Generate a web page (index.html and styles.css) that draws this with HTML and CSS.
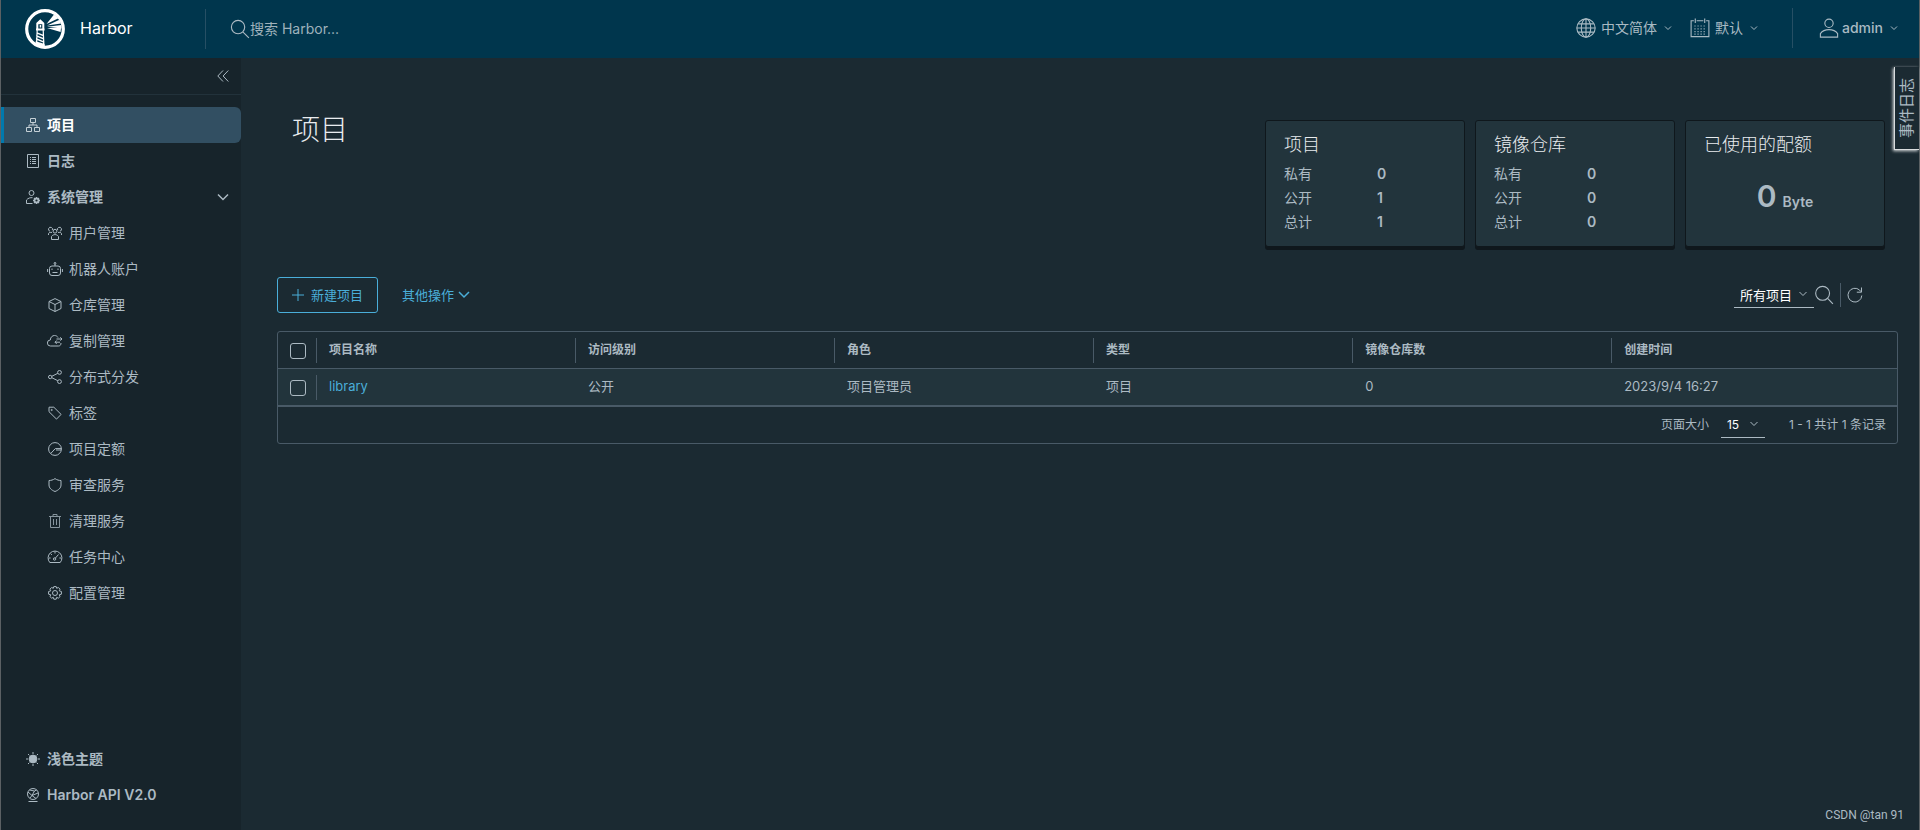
FILE: index.html
```html
<!DOCTYPE html>
<html lang="zh-CN">
<head>
<meta charset="utf-8">
<title>Harbor</title>
<link rel="stylesheet" href="styles.css">
</head>
<body>
<div class="app">
  <header class="header">
    <a class="brand" href="#">
      <svg class="logo" viewBox="0 0 40 40"><circle cx="20" cy="20" r="18.300" fill="none" stroke="#fff" stroke-width="3.200"/><path fill="#fff" d="M15.300 10.300l4 3.700v1.300h-8V14zM11.300 15.300h2v5h-2zM17.300 15.300h2v5h-2zM11 19.600h8.600v2H11zM14.700 16h1.500v2.400h-1.500zM11.500 23l7.300 3v1.600l-7.300-3zM11.300 26l7.700 3.200v1.600L11.200 27.600zM11 29l8.400 3.400v1.700L10.900 30.600zM10.700 32.300l9 2.700.3 3.700L10 36zM11.600 21h1.200l-.6 14h-1.300zM17.600 21h1.200l.7 15h-1.300zM21.500 15L29 5.500l4.500 3.700zM22 16.400l12.500-5.600 1.600 3.600zM22 17.700l14.500-1.700v3.400zM22 19l14-.1-.4 4z"/></svg>
      <span class="brand-name">Harbor</span>
    </a>
    <form class="search" role="search">
      <svg class="ico20" viewBox="0 0 36 36"><circle cx="14.500" cy="14.500" r="12"/><path d="M23.500 23.500L34 34"/></svg>
      <input class="search-input" type="text" aria-label="搜索 Harbor..." placeholder="搜索 Harbor...">
    </form>
    <div class="header-actions">
      <button class="head-btn" type="button">
        <svg class="ico20" viewBox="0 0 36 36"><circle cx="18" cy="18" r="16.500"/><ellipse cx="18" cy="18" rx="8.500" ry="16.500"/><path d="M18 1.500v33M1.500 18h33M4 10.500h28M4 25.500h28"/></svg>
        <span>中文简体</span><svg class="caret" viewBox="0 0 8 8"><path d="M1 2.500l3 3 3-3"/></svg>
      </button>
      <button class="head-btn" type="button">
        <svg class="ico20" viewBox="0 0 36 36"><path d="M7 5H2v28.500h32V5h-5M12 5h12M9.500 1v8M26.500 1v8"/><path stroke-dasharray="2 3.500" d="M8 14.500h22M8 19.500h22M8 24.500h22M8 29h22"/></svg>
        <span>默认</span><svg class="caret" viewBox="0 0 8 8"><path d="M1 2.500l3 3 3-3"/></svg>
      </button>
      <button class="head-btn user" type="button">
        <svg class="ico20" viewBox="0 0 36 36"><circle cx="18" cy="9.500" r="7.500"/><path d="M2.500 34.500V28c4-5.500 10-7 15.500-7s11.500 1.500 15.500 7v6.500z"/></svg>
        <span>admin</span><svg class="caret" viewBox="0 0 8 8"><path d="M1 2.500l3 3 3-3"/></svg>
      </button>
    </div>
  </header>

  <div class="body">
    <nav class="sidebar" aria-label="导航">
      <div class="collapse"><button class="collapse-btn" type="button" aria-label="收起"><svg viewBox="0 0 12 12"><path d="M6 .5L.8 6 6 11.500M11.300 .5L6.100 6l5.200 5.500"/></svg></button></div>
      <a class="item active" href="#"><svg class="ico" viewBox="0 0 14 14"><path d="M4.500.5h5v4h-5zM.5 9.500h5v4h-5zM8.500 9.500h5v4h-5zM7 4.500V7M3 9.500V7h8v2.500"/></svg>项目</a>
      <a class="item" href="#"><svg class="ico" viewBox="0 0 14 14"><path d="M1.500.5h11v13h-11zM4 3.500h1M4 5.500h1M4 7.500h1M4 9.500h1M6 3.500h4M6 5.500h4M6 7.500h4M6 9.500h4"/></svg>日志</a>
      <a class="item" href="#"><svg class="ico" viewBox="0 0 14 14"><circle cx="5.500" cy="3" r="2.500"/><path d="M6.500 13.500h-6V10c1.500-2 4-2.500 6-2.300"/><circle cx="10.500" cy="10.500" r="2" stroke-width="1.800"/><path stroke-width="1.300" d="M10.500 7v1.500M10.500 12.500V14M7 10.500h1.500M12.500 10.500H14M8 8l1 1M12 12l1 1M8 13l1-1M12 9l1-1"/></svg>系统管理<svg class="expand" viewBox="0 0 12 12"><path d="M1 3.500l5 5 5-5"/></svg></a>
      <a class="item sub" href="#"><svg class="ico" viewBox="0 0 14 14"><circle cx="7" cy="5.200" r="1.900"/><path d="M3.500 13.500v-3C4.500 9 6 8.600 7 8.600s2.500.4 3.500 1.900v3zM4.300 4.200A2 2 0 1 0 2 5.200M.5 9V7.500C1 6.500 2.500 6 4 6.500M9.700 4.200A2 2 0 1 1 12 5.200M13.500 9V7.500C13 6.500 11.500 6 10 6.500"/></svg>用户管理</a>
      <a class="item sub" href="#"><svg class="ico wide" viewBox="0 0 16 14"><rect x="2.500" y="4" width="11" height="9.500" rx="2.500"/><circle cx="8" cy="1.300" r=".9"/><path d="M8 2v2M.6 7v3M15.400 7v3M5 6.500v1.500M11 6.500v1.500M5.500 10.500h5"/></svg>机器人账户</a>
      <a class="item sub" href="#"><svg class="ico" viewBox="0 0 14 14"><path d="M7 .6l6 2.900v7l-6 3-6-3v-7zM1 3.500l6 3 6-3M7 6.500v7"/></svg>仓库管理</a>
      <a class="item sub" href="#"><svg class="ico wide" viewBox="0 0 16 14"><path d="M11.500 12H3.500a3 3 0 0 1-.2-6C3.500 3 5.500 1.500 7.500 1.500c1.500 0 2.800.7 3.500 2M14 9c0 2-1 3-2.500 3M9.500 5h5.500M13.300 3.300L15 5l-1.700 1.600M13 8.200H8M9.700 6.500L8 8.200l1.700 1.700"/></svg>复制管理</a>
      <a class="item sub" href="#"><svg class="ico" viewBox="0 0 14 14"><circle cx="2.200" cy="7" r="1.700"/><circle cx="11.500" cy="2.400" r="1.900"/><circle cx="11.500" cy="11.600" r="1.900"/><path d="M3.800 6.300l6-3M3.800 7.700l6 3"/></svg>分布式分发</a>
      <a class="item sub" href="#"><svg class="ico" viewBox="0 0 14 14"><path d="M1 1.500v4.200l7.500 7.400 4.600-4.700L5.800 1.200H1z"/><circle cx="3.700" cy="4" r=".6"/></svg>标签</a>
      <a class="item sub" href="#"><svg class="ico" viewBox="0 0 14 14"><circle cx="7" cy="7" r="6.400"/><path d="M13.400 6.600H7.300L2.800 11.400M13 8H8"/></svg>项目定额</a>
      <a class="item sub" href="#"><svg class="ico" viewBox="0 0 14 14"><path d="M7 .6C5 2 3 2.500 1 2.500V7c0 3 2.500 5.200 6 6.500 3.500-1.300 6-3.500 6-6.500V2.500C11 2.500 9 2 7 .6z"/></svg>审查服务</a>
      <a class="item sub" href="#"><svg class="ico thin" viewBox="0 0 14 14"><path d="M1 2.500h12M2.500 2.500v11h9v-11M5 2.500v-2h4v2M5.500 5v6M8.500 5v6"/></svg>清理服务</a>
      <a class="item sub" href="#"><svg class="ico wide" viewBox="0 0 16 14"><path d="M2.800 12.500A6.900 6.900 0 1 1 13.200 12.500zM8 1.500v2M2 8h1.600M12.400 8H14M3.700 3.700l1.200 1.200"/><path d="M11.500 4.500L8 8.500"/><circle cx="7.600" cy="9" r="1.200"/></svg>任务中心</a>
      <a class="item sub" href="#"><svg class="ico" viewBox="0 0 14 14"><circle cx="7" cy="7" r="2.500"/><path stroke-linejoin="round" d="M5.800.6h2.400l.5 1.700 1.600-.8 1.800 1.700-.9 1.600 2.200.7v2.700l-2.200.6.9 1.700-1.800 1.700-1.600-.9-.5 1.900H5.800l-.5-1.900-1.600.9-1.800-1.700.9-1.700-2.200-.6V5.500l2.200-.7-.9-1.600 1.800-1.700 1.600.8z"/></svg>配置管理</a>
      <div class="side-foot">
        <a class="item" href="#"><svg class="ico" viewBox="0 0 14 14"><circle cx="7" cy="7" r="3.900" fill="currentColor"/><path d="M7 0v2M7 12v2M0 7h2M12 7h2M2 2l1.400 1.400M10.600 10.600L12 12M2 12l1.400-1.400M10.600 3.400L12 2"/></svg>浅色主题</a>
        <a class="item" href="#"><svg class="ico" viewBox="0 0 14 14"><circle cx="7" cy="6" r="5.500"/><path d="M2.500 13.500h9M2 4l4 3.500L12 5M3.500 2l5 1L6 7.500l4 3M4 10l2-2.500M8.500 3l2-1"/></svg>Harbor API V2.0</a>
      </div>
    </nav>

    <main class="main">
      <section class="summary">
        <h1 class="title">项目</h1>
        <div class="cards">
          <article class="card"><h2 class="card-title">项目</h2>
            <dl class="stats"><dt>私有</dt><dd>0</dd><dt>公开</dt><dd>1</dd><dt>总计</dt><dd>1</dd></dl></article>
          <article class="card"><h2 class="card-title">镜像仓库</h2>
            <dl class="stats"><dt>私有</dt><dd>0</dd><dt>公开</dt><dd>0</dd><dt>总计</dt><dd>0</dd></dl></article>
          <article class="card"><h2 class="card-title">已使用的配额</h2>
            <p class="quota"><span class="quota-num">0</span> <span>Byte</span></p></article>
        </div>
      </section>

      <div class="toolbar">
        <button class="btn-new" type="button"><svg viewBox="0 0 12 12"><path d="M6 0v12M0 6h12"/></svg>新建项目</button>
        <button class="btn-more" type="button">其他操作<svg viewBox="0 0 12 12"><path d="M1 3l5 5 5-5"/></svg></button>
        <div class="filters">
          <span class="pick filter-pick"><select aria-label="项目筛选"><option>所有项目</option></select><svg class="pick-caret" viewBox="0 0 8 8"><path d="M.5 2l3.500 3.500L7.500 2"/></svg></span>
          <button class="icon-btn" type="button" aria-label="搜索"><svg class="ico20" viewBox="0 0 36 36"><circle cx="15.500" cy="15" r="12.500"/><path d="M25 24.500L34 34"/></svg></button>
          <button class="icon-btn refresh" type="button" aria-label="刷新"><svg class="ico16" viewBox="0 0 16 16"><path d="M14.800 8.500A6.900 6.900 0 1 1 12.500 3L14 4.700M14.500 .5v4.700H9.800"/></svg></button>
        </div>
      </div>

      <div class="grid">
        <table class="table">
          <colgroup><col class="c-check"><col class="c"><col class="c"><col class="c"><col class="c"><col class="c"><col></colgroup>
          <thead><tr><th class="chk"><input type="checkbox" aria-label="全选"></th><th>项目名称</th><th>访问级别</th><th>角色</th><th>类型</th><th>镜像仓库数</th><th>创建时间</th></tr></thead>
          <tbody><tr><td class="chk"><input type="checkbox" aria-label="选择 library"></td><td><a class="link" href="#">library</a></td><td>公开</td><td>项目管理员</td><td>项目</td><td>0</td><td>2023/9/4 16:27</td></tr></tbody>
        </table>
        <div class="grid-foot">
          <label for="size">页面大小</label>
          <span class="pick size-pick"><select id="size"><option>15</option></select><svg class="pick-caret" viewBox="0 0 8 8"><path d="M.5 2l3.500 3.500L7.500 2"/></svg></span>
          <span>1 - 1 共计 1 条记录</span>
        </div>
      </div>
    </main>
  </div>
  <button class="event-tab" type="button">事件日志</button>
  <span class="credit">CSDN @tan 91</span>
</div>
</body>
</html>
```

FILE: styles.css
```css
* { box-sizing: border-box; }
body {
  margin: 0;
  background: #1b2a32;
  color: #acbac3;
  font: 14px/24px Inter, "Noto Sans CJK SC", sans-serif;
}
h1, h2, p, dl, dd { margin: 0; }
a { color: inherit; text-decoration: none; }
button, input, select { font: inherit; color: inherit; background: none; border: 0; padding: 0; margin: 0; }
svg { display: block; flex: none; fill: none; stroke: currentColor; }

.app {
  position: relative;
  display: flex;
  flex-direction: column;
  min-height: 100vh;
  border: solid #5b6063;
  border-width: 0 1px;
}

/* Header */
.header { display: flex; align-items: center; height: 58px; background: #00364d; }
.brand { display: flex; align-items: center; gap: 15px; width: 204px; padding-left: 24px; color: #fff; }
.logo { width: 40px; height: 40px; stroke: none; }
.brand-name { padding-bottom: 2px; font-size: 16px; }
.search { display: flex; align-items: center; flex: 1; height: 40px; padding-left: 24px; border-left: 1px solid #264f64; }
.search-input { flex: 1; outline: none; }
.search-input::placeholder { color: #9fb2bc; opacity: 1; }
.ico20 { width: 20px; height: 20px; stroke-width: 2; }
.header-actions { display: flex; align-items: center; padding-bottom: 2px; }
.head-btn { display: flex; align-items: center; gap: 5px; margin-right: 18px; color: #a9bac3; }
.caret { width: 8px; height: 8px; margin-left: 2px; }
.head-btn.user { height: 40px; gap: 3px; margin: 0 0 0 16px; padding: 0 21px 0 26px; border-left: 1px solid #264f64; font-weight: 500; }
.user .caret { margin-left: 4px; }

/* Sidebar */
.body { display: flex; flex: 1; }
.sidebar { display: flex; flex-direction: column; width: 240px; flex: none; padding-bottom: 17px; background: #17242b; }
.collapse { display: flex; justify-content: flex-end; align-items: center; height: 37px; margin-bottom: 12px; padding-right: 12px; border-bottom: 1px solid #22323b; }
.collapse-btn svg { width: 12px; height: 12px; }
.item { display: flex; align-items: center; gap: 7px; height: 36px; padding: 0 12px 0 25px; font-weight: 600; }
.item.active { padding-left: 22px; border-left: 3px solid #0079ad; border-radius: 0 6px 6px 0; background: #324f62; color: #fff; }
.item.sub { padding-left: 47px; font-weight: 400; }
.ico { width: 14px; height: 14px; }
.ico.wide { width: 16px; margin: 0 -1px; }
.ico.thin { opacity: .75; }
.active .ico { color: #c5d0d6; }
.expand { width: 12px; height: 12px; margin-left: auto; stroke-width: 1.5; }
.side-foot { margin-top: auto; }

/* Summary */
.main { flex: 1; min-width: 0; padding: 62px 21px 0 36px; }
.summary { display: flex; justify-content: space-between; padding: 0 13px 0 15px; }
.title { margin-top: -8px; color: #e9ecef; font-size: 28px; font-weight: 300; line-height: 36px; }
.cards { display: flex; gap: 10px; }
.card { width: 200px; min-height: 127px; padding: 12px 18px; border: 1px solid #0f171c; border-radius: 3px; background: #22343c; box-shadow: 0 3px 0 #0f171c; }
.card-title { margin-bottom: 5px; color: #e9ecef; font-size: 18px; font-weight: 300; line-height: 24px; }
.stats { display: grid; grid-template-columns: 93px 1fr; }
.stats dd { font-weight: 600; }
.quota { display: flex; justify-content: center; align-items: baseline; gap: 6px; padding-top: 22px; font-weight: 600; }
.quota-num { font-size: 30px; }

/* Toolbar */
.toolbar { display: flex; align-items: center; height: 36px; margin-top: 30px; font-size: 13px; }
.btn-new { display: flex; align-items: center; gap: 7px; height: 36px; padding: 0 14px; border: 1px solid #4aaed9; border-radius: 3px; color: #4aaed9; }
.btn-new svg, .btn-more svg { width: 12px; height: 12px; }
.btn-more { display: flex; align-items: center; gap: 4px; margin-left: 24px; color: #4aaed9; }
.btn-more svg { stroke-width: 1.5; }
.filters { display: flex; align-items: center; margin-left: auto; padding-right: 35px; }
.pick { position: relative; display: flex; border-bottom: 1px solid #acbac3; color: #fff; }
.pick select { width: 100%; padding: 0 20px 0 6px; appearance: none; outline: none; }
.pick-caret { position: absolute; right: 7px; top: 7px; width: 8px; height: 8px; color: #acbac3; pointer-events: none; }
.filter-pick { width: 80px; font-weight: 400; }
.icon-btn { display: flex; align-items: center; height: 24px; }
.refresh { margin-left: 6px; padding-left: 6px; border-left: 1px solid #495a67; }
.ico16 { width: 16px; height: 16px; }

/* Datagrid */
.grid { margin-top: 18px; border: 1px solid #495a67; border-radius: 3px; }
.table { width: 100%; table-layout: fixed; border-spacing: 0; font-size: 13px; }
.c-check { width: 39px; }
.c { width: 16%; }
.table th, .table td { position: relative; padding: 5px 12px 7px 11px; text-align: left; line-height: 24px; }
.table th { padding: 6px 12px; border-bottom: 1px solid #495a67; font-size: 12px; font-weight: 600; }
.table tbody { background: #22343c; }
.table th:not(:last-child)::after, .table td.chk::after {
  content: "";
  position: absolute;
  right: 0;
  top: 6px;
  bottom: 5px;
  width: 1px;
  background: #495a67;
}
.table th:nth-child(n+2), .table td:nth-child(n+2) { padding-left: 12px; }
.table .chk { padding: 2px 0 0 12px; }
.chk input { display: block; width: 16px; height: 16px; appearance: none; border: 1px solid #acbac3; border-radius: 3px; }
.link { color: #4aaed9; }
.grid-foot { display: flex; align-items: center; justify-content: flex-end; height: 38px; padding-right: 11px; border-top: 2px solid #495a67; font-size: 12px; }
.size-pick { width: 44px; margin: 0 24px 0 12px; }

/* Overlays */
.event-tab {
  position: absolute;
  top: 67px;
  right: 0;
  width: 25px;
  height: 83px;
  border: solid #d9dcde;
  border-width: 1px 1px 0 0;
  box-shadow: 1px -1px 3px #d9dcde;
  writing-mode: vertical-rl;
  text-orientation: sideways;
  font-size: 15px;
  transform: rotate(180deg);
}
.credit { position: absolute; right: 15px; bottom: 5px; font: 12px/20px Roboto, sans-serif; }
```
